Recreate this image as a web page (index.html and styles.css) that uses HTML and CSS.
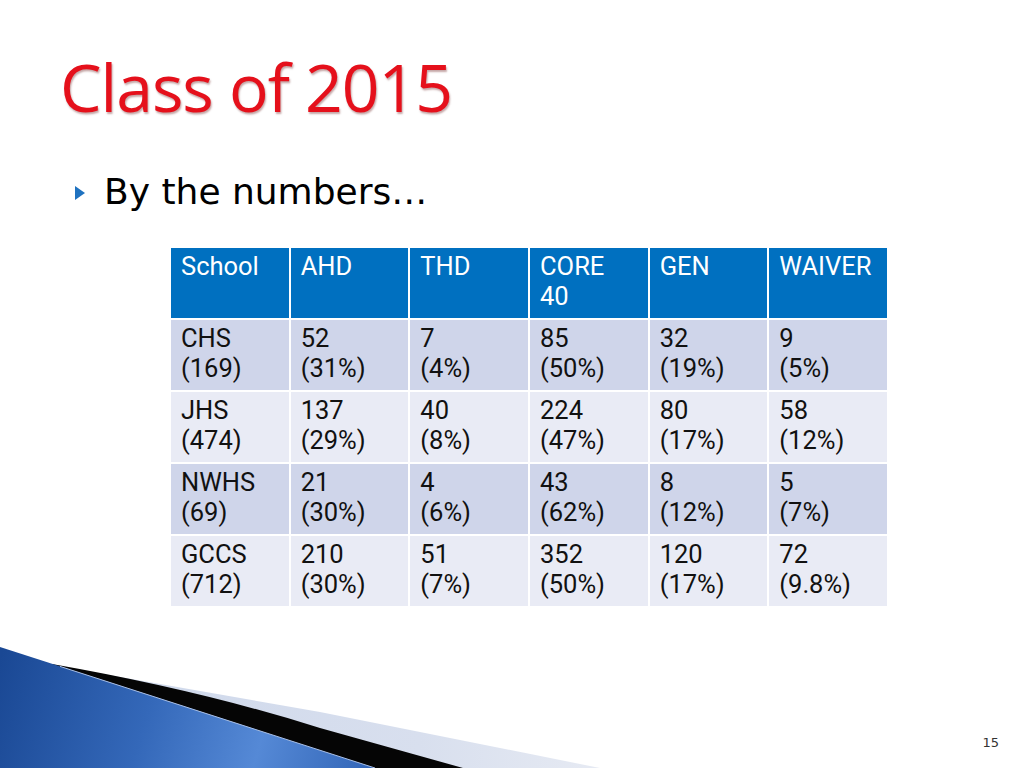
FILE: index.html
```html
<!DOCTYPE html>
<html>
<head>
<meta charset="utf-8">
<link rel="stylesheet" href="styles.css">
</head>
<body>
<div class="slide">
  <h1 class="title">Class of 2015</h1>
  <div class="bullet">
    <svg class="arrow" width="10" height="14" viewBox="0 0 10 14"><polygon points="0,0 10,7 0,14" fill="#1F72C0"/></svg>
    <span>By the numbers…</span>
  </div>
  <div class="table">
    <div class="cell head"><div class="ln">School</div></div>
    <div class="cell head"><div class="ln">AHD</div></div>
    <div class="cell head"><div class="ln">THD</div></div>
    <div class="cell head"><div class="ln">CORE</div><div class="ln">40</div></div>
    <div class="cell head"><div class="ln">GEN</div></div>
    <div class="cell head"><div class="ln">WAIVER</div></div>

    <div class="cell odd"><div class="ln">CHS</div><div class="ln">(169)</div></div>
    <div class="cell odd"><div class="ln">52</div><div class="ln">(31%)</div></div>
    <div class="cell odd"><div class="ln">7</div><div class="ln">(4%)</div></div>
    <div class="cell odd"><div class="ln">85</div><div class="ln">(50%)</div></div>
    <div class="cell odd"><div class="ln">32</div><div class="ln">(19%)</div></div>
    <div class="cell odd"><div class="ln">9</div><div class="ln">(5%)</div></div>

    <div class="cell even"><div class="ln">JHS</div><div class="ln">(474)</div></div>
    <div class="cell even"><div class="ln">137</div><div class="ln">(29%)</div></div>
    <div class="cell even"><div class="ln">40</div><div class="ln">(8%)</div></div>
    <div class="cell even"><div class="ln">224</div><div class="ln">(47%)</div></div>
    <div class="cell even"><div class="ln">80</div><div class="ln">(17%)</div></div>
    <div class="cell even"><div class="ln">58</div><div class="ln">(12%)</div></div>

    <div class="cell odd"><div class="ln">NWHS</div><div class="ln">(69)</div></div>
    <div class="cell odd"><div class="ln">21</div><div class="ln">(30%)</div></div>
    <div class="cell odd"><div class="ln">4</div><div class="ln">(6%)</div></div>
    <div class="cell odd"><div class="ln">43</div><div class="ln">(62%)</div></div>
    <div class="cell odd"><div class="ln">8</div><div class="ln">(12%)</div></div>
    <div class="cell odd"><div class="ln">5</div><div class="ln">(7%)</div></div>

    <div class="cell even"><div class="ln">GCCS</div><div class="ln">(712)</div></div>
    <div class="cell even"><div class="ln">210</div><div class="ln">(30%)</div></div>
    <div class="cell even"><div class="ln">51</div><div class="ln">(7%)</div></div>
    <div class="cell even"><div class="ln">352</div><div class="ln">(50%)</div></div>
    <div class="cell even"><div class="ln">120</div><div class="ln">(17%)</div></div>
    <div class="cell even"><div class="ln">72</div><div class="ln">(9.8%)</div></div>
  </div>

  <svg class="swoosh" width="620" height="128" viewBox="0 640 620 128">
    <defs>
      <linearGradient id="grey" x1="0" y1="0" x2="1" y2="0">
        <stop offset="0" stop-color="#CBD6EA"/>
        <stop offset="0.7" stop-color="#D8DFEE"/>
        <stop offset="1" stop-color="#E6EAF3"/>
      </linearGradient>
      <linearGradient id="blue" gradientUnits="userSpaceOnUse" x1="0" y1="660" x2="375" y2="768">
        <stop offset="0" stop-color="#1A4894"/>
        <stop offset="0.4" stop-color="#3468B9"/>
        <stop offset="0.7" stop-color="#5589D6"/>
        <stop offset="1" stop-color="#3164B6"/>
      </linearGradient>
    </defs>
    <polygon points="80,670 320,712 600,768 0,768" fill="url(#grey)"/>
    <path d="M52,664 Q200,690 320,728 L463,768 L0,768 Z" fill="#050505"/>
    <polygon points="0,647 375,768 0,768" fill="url(#blue)"/>
    <line x1="60" y1="666.4" x2="375" y2="768" stroke="#A9C0E8" stroke-width="1"/>
  </svg>

  <div class="pagenum">15</div>
</div>
</body>
</html>
```

FILE: styles.css
```css
html, body {
  margin: 0;
  padding: 0;
  background: #fff;
}

.slide {
  position: relative;
  width: 1024px;
  height: 768px;
  overflow: hidden;
  background: #fff;
  display: flex;
  flex-direction: column;
}

.title {
  margin: 0;
  padding: 46px 0 0 60px;
  font-family: "Open Sans", "DejaVu Sans", sans-serif;
  font-weight: 400;
  font-size: 66px;
  line-height: 80px;
  letter-spacing: -1px;
  color: #E5101B;
  text-shadow: 1px 2px 2px rgba(90, 0, 0, 0.35);
}

.bullet {
  margin: 44px 0 0 75px;
  display: flex;
  align-items: center;
  gap: 19px;
  font-family: "DejaVu Sans", sans-serif;
  font-size: 36px;
  line-height: 44px;
  color: #000;
}

.arrow {
  flex: none;
  margin-top: 2px;
}

.table {
  margin: 34px 0 0 171px;
  width: 716px;
  display: grid;
  grid-template-columns: repeat(6, 1fr);
  grid-auto-rows: 70px;
  gap: 2px;
  font-family: Roboto, sans-serif;
  font-size: 25.5px;
  line-height: 30px;
}

.cell {
  padding: 3px 6px 0 10px;
  color: #111;
  display: flex;
  flex-direction: column;
}

.ln {
  height: 30px;
  white-space: nowrap;
}

.head {
  background: #0070C0;
  color: #fff;
}

.odd {
  background: #CFD5EA;
}

.even {
  background: #E9EBF5;
}

.swoosh {
  position: absolute;
  left: 0;
  bottom: 0;
}

.pagenum {
  position: absolute;
  right: 25px;
  bottom: 18px;
  font-family: "DejaVu Sans", sans-serif;
  font-size: 13px;
  color: #333;
}
```
